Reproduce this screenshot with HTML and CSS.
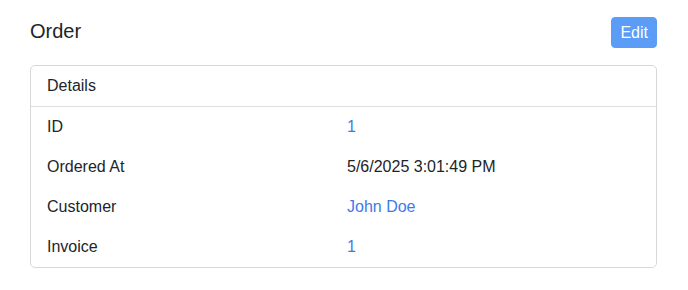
FILE: index.html
```html
<!DOCTYPE html>
<html lang="en">
<head>
<meta charset="utf-8">
<title>Order</title>
<link rel="stylesheet" href="styles.css">
</head>
<body>
<main class="page">
  <div class="page-head">
    <h1 class="title">Order</h1>
    <button class="btn-edit" type="button">Edit</button>
  </div>
  <section class="card">
    <div class="card-header">Details</div>
    <dl class="details">
      <dt>ID</dt><dd><a href="#" class="link">1</a></dd>
      <dt>Ordered At</dt><dd>5/6/2025 3:01:49 PM</dd>
      <dt>Customer</dt><dd><a href="#" class="link">John Doe</a></dd>
      <dt>Invoice</dt><dd><a href="#" class="link">1</a></dd>
    </dl>
  </section>
</main>
</body>
</html>
```

FILE: styles.css
```css
* { box-sizing: border-box; }
html, body { margin: 0; padding: 0; background: #fff; }
body {
  font-family: "Liberation Sans", Arial, Helvetica, sans-serif;
  font-size: 16px;
  line-height: 24px;
  color: #212529;
}
.page {
  padding: 17px 31px 0 30px;
}
.page-head {
  display: flex;
  justify-content: space-between;
  align-items: flex-start;
  margin-bottom: 17px;
}
.title {
  margin: 2px 0 0 0;
  font-size: 20px;
  font-weight: 400;
  line-height: 24px;
}
.btn-edit {
  font-family: inherit;
  font-size: 16px;
  line-height: 21px;
  padding: 4px 8px;
  color: #fff;
  background: #5b9cf7;
  border: 1px solid #5b9cf7;
  border-radius: 4px;
  cursor: pointer;
}
.card {
  border: 1px solid #d6d8db;
  border-radius: 5px;
}
.card-header {
  padding: 8px 16px;
  border-bottom: 1px solid #dcdee0;
}
.details {
  margin: 0;
  padding: 8px 16px;
  display: grid;
  grid-template-columns: 300px 1fr;
  row-gap: 16px;
}
.details dt, .details dd {
  margin: 0;
  font-weight: 400;
}
.link {
  color: #3d7ae8;
  text-decoration: none;
}
```
